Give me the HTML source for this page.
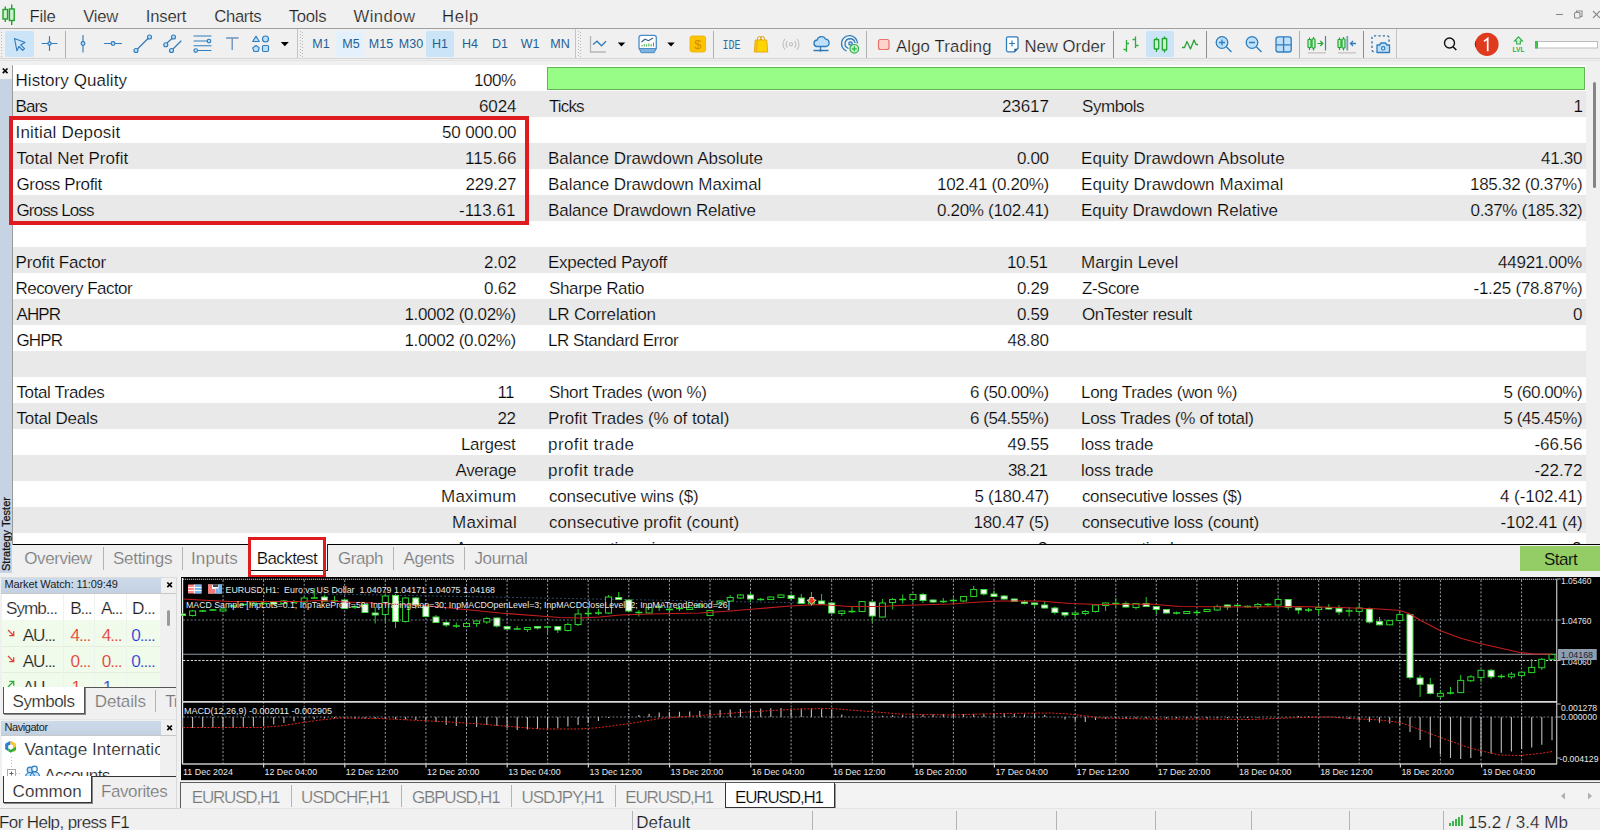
<!DOCTYPE html>
<html><head><meta charset="utf-8"><title>MT5</title>
<style>
*{box-sizing:border-box;margin:0;padding:0}
html,body{width:1600px;height:830px;overflow:hidden;background:#f0f0f0;font-family:"Liberation Sans",sans-serif;color:#1c1c1c;font-size:17px}
.a{position:absolute}
.t{position:absolute;white-space:pre;line-height:20px;height:20px}
/* menu */
/* toolbar */
#tb .sep{position:absolute;top:31px;width:1px;height:27px;background:#b0b0b0}
#tb .sel{position:absolute;background:#cce4f7;border-radius:2px}
#tb .tf{position:absolute;top:36px;height:16px;line-height:16px;font-size:12.5px;color:#1f5f96;text-align:center;white-space:pre}
/* tester table */
#tbl{left:13px;top:65px;width:1573px;height:479px;background:#fff;overflow:hidden}
#tbl .r{position:absolute;left:0;width:1573px;height:26px}
#tbl .g{background:#e9e9e9}
#tbl .r .t{-webkit-text-stroke:0.22px #fff;color:#000}
#tbl .g .t{-webkit-text-stroke:0.22px #e9e9e9;color:#000}
#tbl .t{font-size:17px;top:4.5px;line-height:22px;height:22px}
.la{left:3px}.va{right:1070px;text-align:right}
.lb{left:536px}.vb{right:537px;text-align:right}
.lc{left:1068px}.vc{right:4px;text-align:right}
#tabs .s{position:absolute;top:547px;width:1px;height:23px;background:#b4b4b4}
.redbox{position:absolute;border:4px solid #de1c20}
/* left panels */
.hdr{position:absolute;background:linear-gradient(#cddae9,#c2d1e2);font-size:11.5px;line-height:14px;color:#222;white-space:pre}
.cl{position:absolute;font-size:13px;font-weight:bold;color:#000;line-height:12px}
#ctabs .s{position:absolute;top:785px;width:1px;height:22px;background:#b4b4b4}
#status .s{position:absolute;top:811px;width:1px;height:19px;background:#b4b4b4}
</style></head><body>

<!-- ===== MENU ===== -->
<div id="menu" class="a" style="left:0;top:0;width:1600px;height:28px">
<svg class="a" style="left:0;top:4px" width="20" height="24" viewBox="0 0 20 24">
<g stroke="#21a02c" stroke-width="1.4" fill="#c9f3c9"><line x1="5.3" y1="2.5" x2="5.3" y2="18"/><rect x="3" y="5.5" width="4.6" height="9.5"/><line x1="11.7" y1="0.5" x2="11.7" y2="21"/><rect x="9.4" y="5" width="4.8" height="11.5"/></g></svg>
<span class="t" style="left:29.5px;top:7.0px;font-size:16.7px;letter-spacing:-0.20px;-webkit-text-stroke:0.22px #f0f0f0">File</span><span class="t" style="left:83.3px;top:7.0px;font-size:16.7px;letter-spacing:-0.27px;-webkit-text-stroke:0.22px #f0f0f0">View</span><span class="t" style="left:145.8px;top:7.0px;font-size:16.7px;letter-spacing:-0.22px;-webkit-text-stroke:0.22px #f0f0f0">Insert</span><span class="t" style="left:214.3px;top:7.0px;font-size:16.7px;letter-spacing:-0.36px;-webkit-text-stroke:0.22px #f0f0f0">Charts</span><span class="t" style="left:288.8px;top:7.0px;font-size:16.7px;letter-spacing:-0.28px;-webkit-text-stroke:0.22px #f0f0f0">Tools</span><span class="t" style="left:353.5px;top:7.0px;font-size:16.7px;letter-spacing:0.44px;-webkit-text-stroke:0.22px #f0f0f0">Window</span><span class="t" style="left:442.0px;top:7.0px;font-size:16.7px;letter-spacing:0.65px;-webkit-text-stroke:0.22px #f0f0f0">Help</span>
<span class="t" style="left:896.0px;top:37.0px;font-size:16.7px;letter-spacing:0.16px;-webkit-text-stroke:0.22px #f0f0f0">Algo Trading</span><span class="t" style="left:1024.5px;top:37.0px;font-size:16.7px;letter-spacing:0.02px;-webkit-text-stroke:0.22px #f0f0f0">New Order</span>

<svg class="a" style="left:1550px;top:6px" width="50" height="18" viewBox="0 0 50 18" fill="none" stroke="#8a8a8a" stroke-width="1.1">
<line x1="6" y1="8.5" x2="13" y2="8.5"/><rect x="24.5" y="6.5" width="5.5" height="5.5" rx="1"/><path d="M26.5 6.5v-1.5h5.5v5.5h-2"/><path d="M43 5l7 7M50 5l-7 7"/></svg>
</div>
<div class="a" style="left:0;top:28px;width:1600px;height:1px;background:#a0a0a0"></div>

<!-- ===== TOOLBAR ===== -->
<div id="tb" class="a" style="left:0;top:0;width:1600px;height:60px">
<div class="sel" style="left:5px;top:31px;width:29px;height:26px"></div>
<div class="sel" style="left:336px;top:31px;width:28px;height:26px;background:#e4f0fb"></div>
<div class="sel" style="left:426px;top:31px;width:28px;height:26px"></div>
<div class="sel" style="left:1146px;top:31px;width:28px;height:26px"></div>
<div class="sep" style="left:65px"></div>
<div class="sep" style="left:297px;top:29px;height:29px;background:#c4c4c4"></div>
<div class="sep" style="left:575px;top:29px;height:29px;background:#c4c4c4"></div>
<div class="sep" style="left:713px"></div>
<div class="sep" style="left:866px"></div>
<div class="sep" style="left:1113px;background:#8c8c8c"></div>
<div class="sep" style="left:1206px;background:#8c8c8c"></div>
<div class="sep" style="left:1299px"></div>
<div class="sep" style="left:1363px;background:#8c8c8c"></div>
<div class="sep" style="left:1396px;top:29px;height:29px;background:#c4c4c4"></div>
<span class="tf" style="left:310px;width:22px">M1</span>
<span class="tf" style="left:340px;width:22px">M5</span>
<span class="tf" style="left:366px;width:30px">M15</span>
<span class="tf" style="left:396px;width:30px">M30</span>
<span class="tf" style="left:429px;width:22px">H1</span>
<span class="tf" style="left:459px;width:22px">H4</span>
<span class="tf" style="left:489px;width:22px">D1</span>
<span class="tf" style="left:518px;width:24px">W1</span>
<span class="tf" style="left:548px;width:24px">MN</span>
<svg class="a" style="left:0;top:0" width="1600" height="60" viewBox="0 0 1600 60" fill="none">
<!-- grips -->
<g stroke="#b9b9b9" stroke-width="1" stroke-dasharray="1 2"><line x1="1.5" y1="32" x2="1.5" y2="57"/><line x1="300.5" y1="31" x2="300.5" y2="58"/><line x1="302.5" y1="32" x2="302.5" y2="58"/><line x1="578.5" y1="31" x2="578.5" y2="58"/><line x1="580.5" y1="32" x2="580.5" y2="58"/></g>
<g stroke="#2f7dbd" stroke-width="1.15" fill="#bfe0fb" stroke-linecap="round" stroke-linejoin="round">
<!-- cursor -->
<path d="M14.5 38.5l10.5 4-4.3 2.3 3.8 3.8-1.8 1.7-3.8-3.8-2 4.2z" fill="#cfe6f9"/>
<!-- crosshair -->
<path d="M49.5 36.5v14M42 43.5h15" /><circle cx="49.5" cy="43.5" r="1.6"/>
<!-- vline -->
<path d="M83 35.5v16.5"/><circle cx="83" cy="43.5" r="1.9"/>
<!-- hline -->
<path d="M104.5 43.5h17"/><circle cx="113" cy="43.5" r="1.9"/>
<!-- trend -->
<path d="M137.5 49l10.5-10.5"/><circle cx="136" cy="50.5" r="2"/><circle cx="149.5" cy="37" r="2"/>
<!-- channel -->
<path d="M167 43l5-4.5M173 49l8-8"/><circle cx="173.5" cy="37" r="2"/><circle cx="165.8" cy="44.7" r="2"/><circle cx="171.5" cy="50.5" r="2"/>
<!-- fibo -->
<path d="M194 36h17M194 41h13M194 45.7h17M198 50.5h13"/><circle cx="209" cy="41" r="1.8"/><circle cx="195.7" cy="50.5" r="1.8"/>
<!-- shapes -->
<path d="M256 36.2l3.3 5.3h-6.6z"/><circle cx="265.5" cy="39" r="3"/><path d="M256 45.5l3.3 2.4-1.3 3.6h-4l-1.3-3.6z"/><rect x="262.5" y="45.5" width="6" height="6" rx="1.2"/>
</g>
<!-- T -->
<path d="M226 38h12.5M232.2 38v12" stroke="#6d93bb" stroke-width="1.4"/>
<!-- dropdown arrows -->
<g fill="#000"><path d="M280.8 42h8l-4 4.2z"/><path d="M617.8 42.5h7.4l-3.7 4z"/><path d="M667.3 42.5h7.4l-3.7 4z"/></g>
<!-- line chart icon -->
<path d="M590.5 36v16h15.5" stroke="#b5b5b5" stroke-width="1.3"/><path d="M593 44.5l4-3.3 4.5 4.6 4.5-4.6" stroke="#2f7dbd" stroke-width="1.3"/>
<!-- indicators icon -->
<rect x="639" y="35.3" width="17.3" height="14.5" rx="2.3" fill="#fff" stroke="#4a8cc7" stroke-width="1.3"/>
<path d="M639.3 48.5h16.8l-1.8 4.2h-13.2z" fill="#7fb2e0" stroke="#4a8cc7" stroke-width="1"/>
<path d="M641.5 42l3.5-2.8 3.5 1.5 4.5-2.7" stroke="#2c5f8a" stroke-width="1.1"/>
<g stroke="#3cb043" stroke-width="1"><path d="M642 46.5v-1.5M644.3 46.5v-2.5M646.6 46.5v-2M648.9 46.5v-3M651.2 46.5v-2.5M653.5 46.5v-4"/></g>
<!-- $ -->
<rect x="690" y="36" width="15.6" height="16" rx="2.2" fill="#fcc400" stroke="#eab000" stroke-width="0.8"/>
<text x="697.8" y="49" font-family="Liberation Sans" font-size="13" fill="#d98c00" text-anchor="middle">$</text>
<!-- IDE -->
<text x="722.5" y="48.6" font-family="Liberation Mono" font-size="13.5" fill="#2e6da4" textLength="18" lengthAdjust="spacingAndGlyphs">IDE</text>
<!-- bag -->
<path d="M757.5 40v-1.5a2 2 0 0 1 4 0v1.5M760.5 40v-1.5a2 2 0 0 1 4 0v1.5" stroke="#e0a020" stroke-width="1"/>
<path d="M755.3 40h11.4l1 12h-13.4z" fill="#ffd500" stroke="#e6a817" stroke-width="1"/>
<path d="M757.3 40.5l-1 11.5" stroke="#e6a817" stroke-width="1"/>
<!-- ((o)) -->
<g stroke="#bdbdbd" stroke-width="1.1"><circle cx="791" cy="44.3" r="1.6"/><path d="M787.5 41a5 5 0 0 0 0 6.6M794.5 41a5 5 0 0 1 0 6.6M785 39a8 8 0 0 0 0 10.6M797 39a8 8 0 0 1 0 10.6"/></g>
<!-- cloud -->
<path d="M816.5 46.5a3.3 3.3 0 0 1 .6-6.5 4.6 4.6 0 0 1 8.6-.8 3.7 3.7 0 0 1 .5 7.3z" fill="#bfe0fb" stroke="#2f7dbd" stroke-width="1.3"/>
<path d="M820.5 46.5v3M813.5 50.5h15" stroke="#2f7dbd" stroke-width="1.3"/><circle cx="820.5" cy="50.5" r="1.2" fill="#2f7dbd"/>
<!-- signals -->
<g stroke="#2f7dbd" stroke-width="1.3"><path d="M846.5 51a8 8 0 1 1 11-7.5"/><path d="M848.5 48.5a5 5 0 1 1 6.5-5.5"/><circle cx="850.5" cy="43.5" r="1.7" fill="#bfe0fb"/></g>
<circle cx="854.3" cy="48.8" r="4.3" fill="#c8f5c8" stroke="#2fb14a" stroke-width="1.2"/><path d="M851.8 48.8h5M854.3 46.3v5" stroke="#2fb14a" stroke-width="1.2"/>
<!-- algo square -->
<rect x="878.5" y="39.5" width="10.5" height="10" rx="2" fill="#fdd3cb" stroke="#e8706a" stroke-width="1.2"/>
<!-- new order -->
<path d="M1008 36.8h8.5a1.5 1.5 0 0 1 1.5 1.5v10l-3.5 3.5h-6.5a1.5 1.5 0 0 1-1.5-1.5v-12a1.5 1.5 0 0 1 1.500-1.5z" fill="#fff" stroke="#2f7dbd" stroke-width="1.3"/>
<path d="M1014.300 52v-3.300h3.500z" fill="#1f5f96"/><path d="M1009 43.500h6M1012 40.500v6" stroke="#2f7dbd" stroke-width="1.200"/>
<!-- bars -->
<g stroke="#2fae3c" stroke-width="1.3"><path d="M1126.500 40v12M1123.500 49.500h3M1126.500 43.500h2.500M1135.500 36.500v11.500M1132.500 39.500h3M1135.500 45.500h3"/></g>
<!-- candles -->
<g stroke="#22a532" stroke-width="1.3" fill="#c4f5c4"><path d="M1156.500 37.500v14.500M1164.500 36.500v16"/><rect x="1154.300" y="39.500" width="4.400" height="9.500" rx="0.500"/><rect x="1162.300" y="38.500" width="4.400" height="11.500" rx="0.500"/></g>
<!-- zigzag -->
<path d="M1182 47.500h2.500l2.500-6 3.500 7.500 3.500-9 2 4.500h2" stroke="#22a532" stroke-width="1.300" stroke-linejoin="round"/>
<!-- zoom in/out -->
<g stroke="#2f7dbd" stroke-width="1.300"><circle cx="1222" cy="42.500" r="5.800" fill="#bfe0fb"/><path d="M1226.300 46.800l5.200 5.200M1219 42.500h6M1222 39.500v6"/><circle cx="1252" cy="42.500" r="5.800" fill="#bfe0fb"/><path d="M1256.300 46.800l5.200 5.200M1249 42.500h6"/></g>
<!-- grid -->
<g stroke="#2f7dbd" stroke-width="1.300"><rect x="1276" y="36.800" width="15.200" height="15.200" rx="2.200" fill="#bfe0fb"/><path d="M1283.600 37v15M1276 44.800h15.200"/></g>
<!-- scroll end -->
<g stroke="#22a532" stroke-width="1.200" fill="#c4f5c4"><path d="M1309.500 37.500v12.500M1313.500 37v13.500"/><rect x="1308" y="39.500" width="3" height="8" rx="0.500"/><rect x="1312" y="39" width="3" height="9" rx="0.500"/><path d="M1317.500 43.500h5M1320.300 41l2.500 2.500-2.500 2.500" fill="none"/></g>
<path d="M1325.500 36v14.500" stroke="#4a7fb0" stroke-width="1.200"/><path d="M1308 52.800h18" stroke="#c9c9c9" stroke-width="1.500"/>
<g stroke="#22a532" stroke-width="1.200" fill="#c4f5c4"><path d="M1339.500 37.500v12.500M1343.500 37v13.500"/><rect x="1338" y="39.500" width="3" height="8" rx="0.500"/><rect x="1342" y="39" width="3" height="9" rx="0.500"/></g>
<path d="M1347.300 36v14.500" stroke="#7b9dc0" stroke-width="1.800"/><path d="M1350.500 43.500h5.500M1353 41l-2.500 2.500 2.500 2.500" stroke="#2f7dbd" stroke-width="1.300"/><path d="M1338 52.800h18" stroke="#c9c9c9" stroke-width="1.500"/>
<!-- screenshot -->
<rect x="1372" y="35.800" width="17" height="16" rx="2" stroke="#2f6da8" stroke-width="1.300" stroke-dasharray="2.200 2.200"/>
<rect x="1375.500" y="43" width="15" height="10.500" fill="#f0f0f0"/>
<path d="M1377 45h2.500l1.500-2h4.500l1.500 2h2.500v7.500h-12.500z" fill="#bfe0fb" stroke="#2f7dbd" stroke-width="1.300" stroke-linejoin="round"/><circle cx="1383.200" cy="48.300" r="1.700" stroke="#2f7dbd" stroke-width="1.200" fill="#e8f4fd"/>
<!-- search -->
<circle cx="1449.500" cy="43" r="5" stroke="#111" stroke-width="1.400"/><path d="M1453 46.800l3.300 3.200" stroke="#111" stroke-width="1.600"/>
<!-- notif -->
<path d="M1477.500 40a5 5 0 0 0 0 8" stroke="#111" stroke-width="1.600"/>
<circle cx="1487" cy="44.300" r="11.600" fill="#e03a1e"/>
<path d="M1484 41.400L1487.700 38.500V51.300" stroke="#fff" stroke-width="1.700" stroke-linejoin="miter" fill="none"/>
<!-- LVL -->
<path d="M1518.500 36.800l4 4.200h-2.200v3h-3.600v-3h-2.200z" stroke="#2fae4a" stroke-width="1.100" fill="#d4f5d4"/>
<text x="1512.500" y="51.800" font-family="Liberation Sans" font-weight="bold" font-size="6.500" fill="#2fae4a" textLength="12" lengthAdjust="spacingAndGlyphs">LVL</text>
<!-- progress -->
<rect x="1535.500" y="41.500" width="62" height="6.500" fill="#fff" stroke="#bcbcbc" stroke-width="1"/><rect x="1535" y="41" width="3" height="7.500" fill="#3ec34a"/>
</svg>

</div>
<div class="a" style="left:0;top:58px;width:1600px;height:1px;background:#d4d4d4"></div>
<div class="a" style="left:0;top:60px;width:1600px;height:1px;background:#e2e2e2"></div>

<!-- ===== TESTER ===== -->
<div id="tester">
<div class="a" style="left:0;top:79px;width:12px;height:494px;background:#c5d3e2"></div>
<div class="a" style="left:12px;top:65px;width:1px;height:480px;background:#9a9a9a"></div>
<div class="a" style="left:12px;top:64.5px;width:1588px;height:1px;background:#b4b4b4"></div>
<div id="tbl" class="a">
<div class="r" style="top:0px"><span class="t" style="left:2.5px;letter-spacing:0.07px">History Quality</span><span class="t" style="left:461.0px;letter-spacing:-0.45px">100%</span></div>
<div class="r g" style="top:26px"><span class="t" style="left:2.5px;letter-spacing:-0.90px">Bars</span><span class="t" style="left:466.0px;letter-spacing:-0.12px">6024</span><span class="t" style="left:536.0px;letter-spacing:-0.88px">Ticks</span><span class="t" style="left:989.0px;letter-spacing:-0.08px">23617</span><span class="t" style="left:1069.0px;letter-spacing:-0.45px">Symbols</span><span class="t" style="left:1560.5px;letter-spacing:0.00px">1</span></div>
<div class="r" style="top:52px"><span class="t" style="left:2.5px;letter-spacing:0.19px">Initial Deposit</span><span class="t" style="left:429.0px;letter-spacing:-0.15px">50 000.00</span></div>
<div class="r g" style="top:78px"><span class="t" style="left:3.5px;letter-spacing:0.02px">Total Net Profit</span><span class="t" style="left:452.0px;letter-spacing:0.14px">115.66</span><span class="t" style="left:535.0px;letter-spacing:-0.06px">Balance Drawdown Absolute</span><span class="t" style="left:1004.0px;letter-spacing:-0.38px">0.00</span><span class="t" style="left:1068.0px;letter-spacing:0.06px">Equity Drawdown Absolute</span><span class="t" style="left:1528.0px;letter-spacing:-0.27px">41.30</span></div>
<div class="r" style="top:104px"><span class="t" style="left:3.5px;letter-spacing:-0.37px">Gross Profit</span><span class="t" style="left:452.5px;letter-spacing:-0.21px">229.27</span><span class="t" style="left:535.0px;letter-spacing:-0.05px">Balance Drawdown Maximal</span><span class="t" style="left:924.0px;letter-spacing:-0.31px">102.41 (0.20%)</span><span class="t" style="left:1068.0px;letter-spacing:0.09px">Equity Drawdown Maximal</span><span class="t" style="left:1457.0px;letter-spacing:-0.28px">185.32 (0.37%)</span></div>
<div class="r g" style="top:130px"><span class="t" style="left:3.5px;letter-spacing:-0.89px">Gross Loss</span><span class="t" style="left:446.0px;letter-spacing:0.01px">-113.61</span><span class="t" style="left:535.0px;letter-spacing:-0.19px">Balance Drawdown Relative</span><span class="t" style="left:924.0px;letter-spacing:-0.31px">0.20% (102.41)</span><span class="t" style="left:1068.0px;letter-spacing:-0.06px">Equity Drawdown Relative</span><span class="t" style="left:1457.5px;letter-spacing:-0.31px">0.37% (185.32)</span></div>
<div class="r" style="top:156px"></div>
<div class="r g" style="top:182px"><span class="t" style="left:2.5px;letter-spacing:-0.16px">Profit Factor</span><span class="t" style="left:471.0px;letter-spacing:-0.21px">2.02</span><span class="t" style="left:535.0px;letter-spacing:-0.30px">Expected Payoff</span><span class="t" style="left:994.0px;letter-spacing:-0.40px">10.51</span><span class="t" style="left:1068.0px;letter-spacing:-0.00px">Margin Level</span><span class="t" style="left:1485.0px;letter-spacing:-0.24px">44921.00%</span></div>
<div class="r" style="top:208px"><span class="t" style="left:2.5px;letter-spacing:-0.54px">Recovery Factor</span><span class="t" style="left:471.0px;letter-spacing:-0.21px">0.62</span><span class="t" style="left:536.0px;letter-spacing:-0.34px">Sharpe Ratio</span><span class="t" style="left:1004.0px;letter-spacing:-0.38px">0.29</span><span class="t" style="left:1069.0px;letter-spacing:-0.50px">Z-Score</span><span class="t" style="left:1460.5px;letter-spacing:-0.25px">-1.25 (78.87%)</span></div>
<div class="r g" style="top:234px"><span class="t" style="left:3.5px;letter-spacing:-0.90px">AHPR</span><span class="t" style="left:391.5px;letter-spacing:-0.35px">1.0002 (0.02%)</span><span class="t" style="left:535.0px;letter-spacing:-0.13px">LR Correlation</span><span class="t" style="left:1004.0px;letter-spacing:-0.38px">0.59</span><span class="t" style="left:1069.0px;letter-spacing:-0.36px">OnTester result</span><span class="t" style="left:1560.0px;letter-spacing:0.00px">0</span></div>
<div class="r" style="top:260px"><span class="t" style="left:3.5px;letter-spacing:-0.90px">GHPR</span><span class="t" style="left:391.5px;letter-spacing:-0.35px">1.0002 (0.02%)</span><span class="t" style="left:535.0px;letter-spacing:-0.46px">LR Standard Error</span><span class="t" style="left:994.5px;letter-spacing:-0.27px">48.80</span></div>
<div class="r g" style="top:286px"></div>
<div class="r" style="top:312px"><span class="t" style="left:3.5px;letter-spacing:-0.40px">Total Trades</span><span class="t" style="left:484.5px;letter-spacing:-0.69px">11</span><span class="t" style="left:536.0px;letter-spacing:-0.34px">Short Trades (won %)</span><span class="t" style="left:957.0px;letter-spacing:-0.44px">6 (50.00%)</span><span class="t" style="left:1068.0px;letter-spacing:-0.29px">Long Trades (won %)</span><span class="t" style="left:1490.5px;letter-spacing:-0.44px">5 (60.00%)</span></div>
<div class="r g" style="top:338px"><span class="t" style="left:3.5px;letter-spacing:-0.26px">Total Deals</span><span class="t" style="left:484.5px;letter-spacing:-0.45px">22</span><span class="t" style="left:535.0px;letter-spacing:-0.08px">Profit Trades (% of total)</span><span class="t" style="left:957.0px;letter-spacing:-0.44px">6 (54.55%)</span><span class="t" style="left:1068.0px;letter-spacing:-0.29px">Loss Trades (% of total)</span><span class="t" style="left:1490.5px;letter-spacing:-0.44px">5 (45.45%)</span></div>
<div class="r" style="top:364px"><span class="t" style="left:448.0px;letter-spacing:-0.33px">Largest</span><span class="t" style="left:535.0px;letter-spacing:0.43px">profit trade</span><span class="t" style="left:994.5px;letter-spacing:-0.27px">49.55</span><span class="t" style="left:1068.0px;letter-spacing:-0.14px">loss trade</span><span class="t" style="left:1521.5px;letter-spacing:-0.05px">-66.56</span></div>
<div class="r g" style="top:390px"><span class="t" style="left:442.5px;letter-spacing:-0.34px">Average</span><span class="t" style="left:535.0px;letter-spacing:0.43px">profit trade</span><span class="t" style="left:995.0px;letter-spacing:-0.65px">38.21</span><span class="t" style="left:1068.0px;letter-spacing:-0.14px">loss trade</span><span class="t" style="left:1521.5px;letter-spacing:-0.05px">-22.72</span></div>
<div class="r" style="top:416px"><span class="t" style="left:428.0px;letter-spacing:0.25px">Maximum</span><span class="t" style="left:536.0px;letter-spacing:-0.23px">consecutive wins ($)</span><span class="t" style="left:961.5px;letter-spacing:-0.31px">5 (180.47)</span><span class="t" style="left:1069.0px;letter-spacing:-0.38px">consecutive losses ($)</span><span class="t" style="left:1487.0px;letter-spacing:-0.05px">4 (-102.41)</span></div>
<div class="r g" style="top:442px"><span class="t" style="left:439.0px;letter-spacing:0.25px">Maximal</span><span class="t" style="left:536.0px;letter-spacing:0.01px">consecutive profit (count)</span><span class="t" style="left:960.5px;letter-spacing:-0.20px">180.47 (5)</span><span class="t" style="left:1069.0px;letter-spacing:-0.23px">consecutive loss (count)</span><span class="t" style="left:1487.5px;letter-spacing:-0.10px">-102.41 (4)</span></div>
<div class="r" style="top:468px"><span class="t" style="left:442.5px;letter-spacing:-0.34px">Average</span><span class="t" style="left:536.0px;letter-spacing:-0.33px">consecutive wins</span><span class="t" style="left:1025.0px;letter-spacing:0.00px">3</span><span class="t" style="left:1069.0px;letter-spacing:-0.54px">consecutive losses</span><span class="t" style="left:1559.0px;letter-spacing:0.00px">2</span></div>
<div class="a" style="left:534px;top:2px;width:1038px;height:23px;background:#98fd86;border:1px solid #62b455"></div>
</div>
<div class="a" style="left:13px;top:544px;width:1587px;height:1px;background:#000"></div>
</div>

<!-- ===== BOTTOM ===== -->
<div id="tabs">
<svg class="a" style="left:0;top:490px" width="12" height="84" viewBox="0 0 12 84"><text transform="translate(10,81) rotate(-90)" font-family="Liberation Sans" font-size="11.5" fill="#111" stroke="#111" stroke-width="0.25" textLength="74" lengthAdjust="spacingAndGlyphs">Strategy Tester</text></svg>
<svg class="a" style="left:0;top:64px" width="12" height="14" viewBox="0 0 12 14"><path d="M2.800 4.5l4.700 4.700M7.5 4.5l-4.700 4.7" stroke="#000" stroke-width="1.7"/></svg>
<span class="t" style="left:24.3px;top:549.0px;font-size:17px;letter-spacing:-0.44px;color:#777;-webkit-text-stroke:0.22px #f0f0f0">Overview</span><div class="s" style="left:103px"></div>
<span class="t" style="left:113.0px;top:549.0px;font-size:17px;letter-spacing:-0.28px;color:#777;-webkit-text-stroke:0.22px #f0f0f0">Settings</span><div class="s" style="left:182px"></div>
<span class="t" style="left:191.0px;top:549.0px;font-size:17px;letter-spacing:0.10px;color:#777;-webkit-text-stroke:0.22px #f0f0f0">Inputs</span>
<div class="a" style="left:250px;top:541px;width:77px;height:34px;background:#fff"></div>
<div class="a" style="left:251px;top:570px;width:77px;height:1px;background:#111"></div>
<div class="a" style="left:327px;top:544px;width:1px;height:27px;background:#222"></div>
<span class="t" style="left:256.8px;top:549.0px;font-size:17px;letter-spacing:-0.61px;color:#000;-webkit-text-stroke:0.22px #fff">Backtest</span>
<span class="t" style="left:338.0px;top:549.0px;font-size:17px;letter-spacing:-0.45px;color:#777;-webkit-text-stroke:0.22px #f0f0f0">Graph</span><div class="s" style="left:393px"></div>
<span class="t" style="left:403.6px;top:549.0px;font-size:17px;letter-spacing:-0.41px;color:#777;-webkit-text-stroke:0.22px #f0f0f0">Agents</span><div class="s" style="left:464px"></div>
<span class="t" style="left:474.5px;top:549.0px;font-size:17px;letter-spacing:-0.41px;color:#777;-webkit-text-stroke:0.22px #f0f0f0">Journal</span>
<div class="a" style="left:1520px;top:546px;width:80px;height:25px;background:#94cc65"></div>
<span class="t" style="left:1544.0px;top:550.0px;font-size:17px;letter-spacing:-0.54px;color:#000;-webkit-text-stroke:0.22px #94cc65">Start</span>
<div class="redbox" style="left:9px;top:116px;width:520px;height:109px"></div>
<div class="redbox" style="left:247.600px;top:537.200px;width:78.5px;height:41px;border-width:3.600px"></div>
<div class="a" style="left:1586px;top:65px;width:14px;height:479px;background:#f0f0f0"></div>
<div class="a" style="left:1593.200px;top:82px;width:3px;height:106px;background:#858585;border-radius:1.5px"></div>
</div>

<div id="mw">
<div class="a" style="left:0;top:576px;width:177px;height:232px;background:#f0f0f0"></div>
<div class="a" style="left:0;top:577px;width:177px;height:1px;background:#dcdcdc"></div>
<div class="hdr" style="left:1px;top:578px;width:160px;height:15px"></div>
<span class="t" style="left:4.4px;top:574.0px;font-size:11px;letter-spacing:-0.10px;color:#1c1c1c">Market Watch: 11:09:49</span>
<svg class="a" style="left:164px;top:579px" width="12" height="12" viewBox="0 0 12 12"><path d="M3.3 3.5l4.600 4.600M7.900 3.5l-4.600 4.600" stroke="#000" stroke-width="1.7"/></svg>
<div class="a" style="left:1px;top:593px;width:175px;height:1px;background:#c8c8c8"></div>
<div class="a" style="left:2px;top:594px;width:158px;height:93px;background:#fff"></div>
<div class="a" style="left:2px;top:620px;width:158px;height:67px;background:#f0fbec"></div>
<div class="a" style="left:2px;top:646px;width:158px;height:1px;background:#e3eedf"></div>
<div class="a" style="left:2px;top:672px;width:158px;height:1px;background:#e3eedf"></div>
<div class="a" style="left:63px;top:594px;width:1px;height:93px;background:#eef2ec"></div>
<div class="a" style="left:94px;top:594px;width:1px;height:93px;background:#eef2ec"></div>
<div class="a" style="left:126px;top:594px;width:1px;height:93px;background:#eef2ec"></div>
<span class="t" style="left:6.0px;top:598.0px;font-size:17.2px;letter-spacing:-1.05px;-webkit-text-stroke:0.22px #fff">Symb...</span><span class="t" style="left:70.3px;top:598.0px;font-size:17.2px;letter-spacing:-1.20px;-webkit-text-stroke:0.22px #fff">B...</span><span class="t" style="left:101.0px;top:598.0px;font-size:17.2px;letter-spacing:-1.20px;-webkit-text-stroke:0.22px #fff">A...</span><span class="t" style="left:132.0px;top:598.0px;font-size:17.2px;letter-spacing:-0.99px;-webkit-text-stroke:0.22px #fff">D...</span>
<span class="t" style="left:22.7px;top:625.0px;font-size:17.2px;letter-spacing:-1.20px;-webkit-text-stroke:0.22px #f0fbec">AU...</span><span class="t" style="left:70.5px;top:625.0px;font-size:17.2px;letter-spacing:-1.04px;color:#e0301e;-webkit-text-stroke:0.22px #f0fbec">4...</span><span class="t" style="left:101.8px;top:625.0px;font-size:17.2px;letter-spacing:-1.04px;color:#e0301e;-webkit-text-stroke:0.22px #f0fbec">4...</span><span class="t" style="left:131.2px;top:625.0px;font-size:17.2px;letter-spacing:-1.02px;color:#1c2fd0;-webkit-text-stroke:0.22px #f0fbec">0....</span>
<span class="t" style="left:22.7px;top:651.0px;font-size:17.2px;letter-spacing:-1.20px;-webkit-text-stroke:0.22px #f0fbec">AU...</span><span class="t" style="left:70.5px;top:651.0px;font-size:17.2px;letter-spacing:-1.04px;color:#e0301e;-webkit-text-stroke:0.22px #f0fbec">0...</span><span class="t" style="left:101.8px;top:651.0px;font-size:17.2px;letter-spacing:-1.04px;color:#e0301e;-webkit-text-stroke:0.22px #f0fbec">0...</span><span class="t" style="left:131.2px;top:651.0px;font-size:17.2px;letter-spacing:-1.02px;color:#1c2fd0;-webkit-text-stroke:0.22px #f0fbec">0....</span>
<div class="a" style="left:2px;top:672px;width:158px;height:15px;overflow:hidden"><span class="t" style="left:20.7px;top:5.0px;font-size:17.2px;letter-spacing:-1.20px;-webkit-text-stroke:0.22px #f0fbec">AU...</span><span class="t" style="left:69.5px;top:5.0px;font-size:17.2px;letter-spacing:-1.20px;color:#e0301e;-webkit-text-stroke:0.22px #f0fbec">1...</span><span class="t" style="left:100.8px;top:5.0px;font-size:17.2px;letter-spacing:-1.20px;color:#1c2fd0;-webkit-text-stroke:0.22px #f0fbec">1...</span></div>
<svg class="a" style="left:2px;top:620px" width="20" height="67" viewBox="0 0 20 67" fill="none" stroke-width="1.3"><path d="M6 10l5.5 5.5M7.3 15.700h4.400v-4.400" stroke="#e0413a"/><path d="M6 36l5.5 5.5M7.3 41.700h4.400v-4.400" stroke="#e0413a"/><path d="M6 67l5.5-5.5M7.3 61.300h4.400v4.400" stroke="#2fae3c"/></svg>
<div class="a" style="left:166.5px;top:610px;width:3px;height:16px;background:#9a9a9a;border-radius:1.5px"></div>
<div class="a" style="left:84px;top:687px;width:92px;height:1px;background:#555"></div>
<div class="a" style="left:3px;top:687px;width:82px;height:27px;background:#fff;border:1px solid #555;border-top:none;box-shadow:1px 1px 0 #888"></div>
<span class="t" style="left:12.6px;top:692.0px;font-size:17px;letter-spacing:-0.48px;-webkit-text-stroke:0.22px #fff">Symbols</span><span class="t" style="left:94.8px;top:692.0px;font-size:17px;letter-spacing:-0.14px;color:#777;-webkit-text-stroke:0.22px #f0f0f0">Details</span>
<div class="a" style="left:155px;top:690px;width:1px;height:22px;background:#b4b4b4"></div>
<div class="a" style="left:164px;top:688px;width:12px;height:24px;overflow:hidden"><span class="t" style="left:1.3px;top:4.0px;font-size:17px;letter-spacing:-1.20px;color:#777;-webkit-text-stroke:0.22px #f0f0f0">Tr</span></div>
<div class="a" style="left:0;top:719px;width:177px;height:1px;background:#e6e6e6"></div>
<div class="hdr" style="left:1px;top:721px;width:160px;height:14px"></div>
<span class="t" style="left:4.5px;top:717.0px;font-size:11px;letter-spacing:-0.44px;color:#1c1c1c">Navigator</span>
<svg class="a" style="left:164px;top:722px" width="12" height="12" viewBox="0 0 12 12"><path d="M3.3 3.5l4.600 4.600M7.900 3.5l-4.600 4.600" stroke="#000" stroke-width="1.7"/></svg>
<div class="a" style="left:1px;top:735px;width:175px;height:1px;background:#c8c8c8"></div>
<div class="a" style="left:2px;top:736px;width:158px;height:40px;background:#fff;overflow:hidden">
  <span class="t" style="left:22.4px;top:3.0px;font-size:17.2px;letter-spacing:0.01px;-webkit-text-stroke:0.22px #fff">Vantage International</span>
  <span class="t" style="left:42.3px;top:29.0px;font-size:17.2px;letter-spacing:-0.66px;-webkit-text-stroke:0.22px #fff">Accounts</span>
  <svg class="a" style="left:0;top:0" width="40" height="40" viewBox="0 0 40 40" fill="none">
   <path d="M3.200 7.800l5.300-3v3.600l-2.3 1.300v5.300l-3-1.800z" fill="#2a7fd0"/><path d="M8.5 4.800l5.5 3-2.900 1.700-2.600-1.5z" fill="#f7c325"/><path d="M14 7.800v6.800l-2.900 1.700v-6.800z" fill="#f7c325"/><path d="M6.200 15.300l2.5 1.5 5.300-3.100v-3l-5.3 3.100-2.5-1.5z" fill="#2fae3c"/>
   <path d="M9.5 21v12" stroke="#bbb" stroke-dasharray="1 2"/><rect x="5.5" y="33.5" width="8" height="8" stroke="#aaa"/><path d="M7.5 37.5h4M9.5 35.5v4" stroke="#666"/><path d="M14 37.5h6" stroke="#bbb" stroke-dasharray="1 2"/>
   <circle cx="28" cy="34" r="2.8" fill="#bfe0fb" stroke="#2f7dbd" stroke-width="1.2"/><circle cx="32.5" cy="33" r="2.8" fill="#e8f4fd" stroke="#2f7dbd" stroke-width="1.2"/><path d="M23.5 41a4.5 4.5 0 0 1 9 0M28.5 41a4.5 4.5 0 0 1 9-1" stroke="#2f7dbd" stroke-width="1.2" fill="#bfe0fb"/>
  </svg>
</div>
<div class="a" style="left:91px;top:776px;width:85px;height:1px;background:#333"></div>
<div class="a" style="left:3px;top:776px;width:89px;height:27px;background:#fff;border:1px solid #333;border-top:none;box-shadow:1px 1px 0 #888"></div>
<span class="t" style="left:12.6px;top:782.0px;font-size:17px;letter-spacing:0.04px;-webkit-text-stroke:0.22px #fff">Common</span><span class="t" style="left:101.0px;top:782.0px;font-size:17px;letter-spacing:-0.41px;color:#777;-webkit-text-stroke:0.22px #f0f0f0">Favorites</span>
<div class="a" style="left:176px;top:577px;width:1px;height:231px;background:#dadada"></div>
<div class="a" style="left:0;top:808px;width:180px;height:1px;background:#cfcfcf"></div>
</div>

<svg class="a" style="left:181px;top:577px" width="1419" height="206" viewBox="181 577 1419 206" fill="none" font-family="Liberation Sans">
<rect x="181" y="577" width="1419" height="203.400" fill="#000"/><rect x="181" y="780.400" width="1419" height="2.600" fill="#f6f6f6"/>
<path d="M223.0 580V764M263.6 580V764M304.2 580V764M344.7 580V764M385.3 580V764M425.9 580V764M466.5 580V764M507.1 580V764M547.6 580V764M588.2 580V764M628.8 580V764M669.4 580V764M710.0 580V764M750.5 580V764M791.1 580V764M831.7 580V764M872.3 580V764M912.9 580V764M953.4 580V764M994.0 580V764M1034.6 580V764M1075.2 580V764M1115.8 580V764M1156.3 580V764M1196.9 580V764M1237.5 580V764M1278.1 580V764M1318.7 580V764M1359.2 580V764M1399.8 580V764M1440.4 580V764M1481.0 580V764M1521.6 580V764" stroke="#99a1a9" stroke-width="1" stroke-dasharray="2 1.8"/>
<path d="M183 620H1556" stroke="#70787f" stroke-width="1.1" stroke-dasharray="2 1.8"/>
<path d="M300 593.500L810 603" stroke="#2c4a66" stroke-width="1" stroke-dasharray="2 2"/>
<path d="M183 660.500H1556" stroke="#e0e0e0" stroke-width="1" stroke-dasharray="2.300 1.550"/>
<path d="M183 717H1556" stroke="#70777f" stroke-width="1" stroke-dasharray="2 1.8"/>
<path d="M183 579.300H1556" stroke="#d0d0d0" stroke-width="1.1" stroke-dasharray="1.200 0.800"/>
<path d="M182.500 578V764" stroke="#f0f0f0" stroke-width="1.4"/>
<path d="M1556.700 579V764" stroke="#b4b4b4" stroke-width="1.3"/>
<path d="M182 701.800H1557" stroke="#d6d6d6" stroke-width="1.8"/>
<path d="M182 764H1557" stroke="#c4c4c4" stroke-width="1.3"/>
<path d="M183 654.300H1556" stroke="#9099a6" stroke-width="1.1"/>
<path d="M263.6 764v3.5M344.8 764v3.5M426.0 764v3.5M507.2 764v3.5M588.4 764v3.5M669.6 764v3.5M750.8 764v3.5M832.0 764v3.5M913.2 764v3.5M994.4 764v3.5M1075.6 764v3.5M1156.8 764v3.5M1238.0 764v3.5M1319.2 764v3.5M1400.4 764v3.5M1481.6 764v3.5" stroke="#d0d0d0" stroke-width="1.2"/>
<path d="M1556.700 579h4M1556.700 620h4M1556.700 660.500h4M1556.700 704h4M1556.700 717h4M1556.700 758h4" stroke="#b4b4b4" stroke-width="1"/>
<path d="M182.4 717V728.0M192.6 717V728.0M202.7 717V727.8M212.9 717V727.7M223.0 717V727.5M233.1 717V727.1M243.3 717V726.7M253.4 717V726.4M263.6 717V725.9M273.7 717V724.4M283.9 717V722.9M294.0 717V721.3M304.2 717V719.9M314.3 717V719.2M324.4 717V718.5M334.6 717V718.5M344.7 717V718.5M354.9 717V718.6M365.0 717V718.8M375.2 717V718.9M385.3 717V719.1M395.5 717V719.3M405.6 717V719.6M415.8 717V719.9M425.9 717V720.7M436.0 717V722.0M446.2 717V725.0M456.3 717V726.0M466.5 717V726.5M476.6 717V726.9M486.8 717V725.0M496.9 717V726.0M507.1 717V728.0M517.2 717V730.0M527.4 717V729.5M537.5 717V729.0M547.6 717V728.5M557.8 717V728.0M567.9 717V726.5M578.1 717V725.0M588.2 717V723.0M598.4 717V720.9M608.5 717V717.9M628.8 717V716.0M638.9 717V715.0M649.1 717V713.7M659.2 717V712.5M669.4 717V712.1M679.5 717V711.7M689.7 717V711.4M699.8 717V711.0M710.0 717V710.5M720.1 717V710.0M730.2 717V709.5M740.4 717V709.0M750.5 717V708.7M760.7 717V708.5M770.8 717V708.2M781.0 717V708.0M791.1 717V708.2M801.3 717V708.4M811.4 717V708.6M821.6 717V708.8M831.7 717V709.8M841.8 717V714.6M872.3 717V716.1M882.4 717V715.7M892.6 717V715.3M902.7 717V714.9M912.9 717V714.7M923.0 717V714.5M933.1 717V714.3M943.3 717V714.1M953.4 717V714.0M963.6 717V713.9M973.7 717V713.8M983.9 717V713.7M994.0 717V713.6M1004.2 717V713.6M1014.3 717V713.9M1024.5 717V714.2M1034.6 717V714.5M1044.7 717V714.8M1065.0 717V719.6M1075.2 717V720.8M1085.3 717V721.9M1095.5 717V720.0M1105.6 717V718.9M1115.8 717V718.5M1125.9 717V718.5M1136.0 717V718.5M1146.2 717V718.5M1156.3 717V718.5M1166.5 717V718.5M1176.6 717V718.5M1186.8 717V718.5M1196.9 717V718.5M1207.1 717V718.4M1217.2 717V718.3M1227.4 717V718.2M1237.5 717V718.1M1247.6 717V718.0M1257.8 717V717.7M1298.4 717V716.1M1308.5 717V716.3M1339.0 717V717.9M1349.1 717V718.9M1359.2 717V720.4M1369.4 717V721.9M1379.5 717V722.7M1389.7 717V723.5M1399.8 717V725.0M1410.0 717V732.1M1420.1 717V740.1M1430.3 717V747.8M1440.4 717V754.6M1450.5 717V757.9M1460.7 717V759.0M1470.8 717V758.1M1481.0 717V755.2M1491.1 717V753.6M1501.3 717V752.7M1511.4 717V751.5M1521.6 717V749.1M1531.7 717V747.5M1541.8 717V744.7M1552.0 717V740.3" stroke="#bdbdbd" stroke-width="1.1"/>
<path d="M183 727.5 L230 727.5 L260 727.5 L280 726 L300 723 L320 720 L340 718 L380 718.5 L400 719.5 L420 720.5 L450 722 L480 724 L510 726.5 L540 729 L580 729 L600 727.5 L630 723.5 L660 718.5 L700 715.5 L740 712.5 L780 710 L800 709 L830 708.5 L870 711.5 L900 714 L950 715 L1000 713.5 L1050 713 L1070 714 L1090 716.5 L1100 718 L1150 719 L1200 719 L1250 719.5 L1300 717.5 L1330 717 L1350 718.5 L1380 720 L1400 722.5 L1410 726 L1430 733.5 L1450 741 L1470 748 L1490 753 L1500 755 L1520 755.5 L1540 753.5 L1552 751.5" stroke="#e0261c" stroke-width="1" stroke-dasharray="2 1.5"/>
<path d="M182.4 613V616M192.6 610V616.5M202.7 610V612M212.9 609V611M223.0 609V611M233.1 605V607M243.3 603.5V606M253.4 602V606M263.6 602V605M273.7 601V605M283.9 600V604.5M294.0 600V603.5M304.2 597V603M314.3 588V598.5M324.4 595V601.5M334.6 596V603M344.7 598.5V609M354.9 605V609M365.0 604V613M375.2 607V623.5M385.3 594V622M395.5 594V628M405.6 597V622.5M415.8 597V609M425.9 605.5V617M436.0 615V623M446.2 621V627M456.3 622.5V628M466.5 623V627M476.6 620.5V627M486.8 617V624M496.9 617.5V627.5M507.1 626V629.5M517.2 626V629.5M527.4 627V632M537.5 626V629.5M547.6 626V633M557.8 626V633M567.9 622.5V631.5M578.1 609V626M588.2 608V617M598.4 609V615M608.5 595V614M618.7 592V600M628.8 599.5V611.5M638.9 610V616.5M649.1 607V613.5M659.2 604V611M669.4 606V614M679.5 606V611M689.7 607V610M699.8 604.5V607.5M710.0 610V616M720.1 600.5V604.5M730.2 595V601.5M740.4 594V599M750.5 593V602M760.7 598V600.5M770.8 596.5V600M781.0 594.5V598M791.1 594V600M801.3 594V604M811.4 592V606M821.6 594V604.5M831.7 602V613.5M841.8 610.5V616M852.0 607V613M862.1 601V612M872.3 601.5V622M882.4 599V617.5M892.6 598V609.5M902.7 594.5V603.5M912.9 594V602.5M923.0 593V603M933.1 599.5V603M943.3 598V603M953.4 597.5V603M963.6 596V602M973.7 586V597M983.9 589V595.5M994.0 590.5V597M1004.2 595V599.5M1014.3 598.5V602M1024.5 600V604.5M1034.6 602.5V607M1044.7 602V608.5M1054.9 606.5V614.5M1065.0 612V617.5M1075.2 612V618.5M1085.3 610V615.5M1095.5 604.5V612.5M1105.6 602.5V611M1115.8 598V607M1125.9 601.5V607.5M1136.0 603V609.5M1146.2 597V607M1156.3 606V614M1166.5 609V613.5M1176.6 611.5V614.5M1186.8 611V614M1196.9 610V614.5M1207.1 609V612M1217.2 604.5V611M1227.4 604.5V610M1237.5 604V611M1247.6 605.5V607.5M1257.8 603V609M1267.9 603V606.5M1278.1 597.5V606.5M1288.2 599V610M1298.4 607.5V614M1308.5 608V612M1318.7 605V614.5M1328.8 604V609.5M1339.0 605V615M1349.1 607V616.5M1359.2 604V614M1369.4 607.5V623.5M1379.5 617V625.3M1389.7 620V625.3M1399.8 611V621M1410.0 614V679.5M1420.1 675V697M1430.3 678V694.5M1440.4 690V698M1450.5 687V694.5M1460.7 675V693M1470.8 675V682M1481.0 669.8V682M1491.1 669V679M1501.3 674V678.5M1511.4 672V679M1521.6 671V678M1531.7 659V673M1541.8 658V670M1552.0 654V660" stroke="#25cc25" stroke-width="1"/>
<path d="M199.2 611h7M209.4 610h7M229.6 606h7M239.8 604.5h7M260.1 603.5h7M290.5 602h7M310.8 598h7M331.1 601h7M351.4 607h7M452.8 626h7M513.7 629h7M544.1 627h7M584.7 613.5h7M594.9 613h7M635.4 612.5h7M655.7 607h7M665.9 609.5h7M676.0 608.5h7M757.2 599.5h7M848.5 611.5h7M899.2 599.5h7M939.8 601.5h7M949.9 600.5h7M1112.3 603.5h7M1173.1 613h7M1193.4 612.5h7M1234.0 605.5h7M1244.1 606.5h7M1264.4 604.5h7M1305.0 610h7M1345.6 611h7M1447.0 693h7M1497.8 676.5h7" stroke="#2bdc2b" stroke-width="1.4"/>
<g fill="#000" stroke="#28cf28" stroke-width="1.05"><rect x="189.6" y="611" width="6" height="4.5"/><rect x="220.0" y="609" width="6" height="2.0"/><rect x="250.4" y="603" width="6" height="2.0"/><rect x="280.9" y="601" width="6" height="2.5"/><rect x="301.2" y="598" width="6" height="4.0"/><rect x="382.3" y="596" width="6" height="18.5"/><rect x="402.6" y="598" width="6" height="23.5"/><rect x="463.5" y="623.5" width="6" height="3.0"/><rect x="473.6" y="621" width="6" height="2.5"/><rect x="483.8" y="618.5" width="6" height="3.5"/><rect x="524.4" y="627.5" width="6" height="2.0"/><rect x="564.9" y="624.5" width="6" height="6.0"/><rect x="575.1" y="614" width="6" height="10.5"/><rect x="605.5" y="597" width="6" height="16.0"/><rect x="646.1" y="607.5" width="6" height="5.5"/><rect x="686.7" y="607.5" width="6" height="2.0"/><rect x="696.8" y="605" width="6" height="2.0"/><rect x="707.0" y="610.5" width="6" height="5.0"/><rect x="717.1" y="601" width="6" height="3.0"/><rect x="727.2" y="597.5" width="6" height="3.5"/><rect x="737.4" y="595" width="6" height="3.0"/><rect x="767.8" y="597" width="6" height="2.5"/><rect x="778.0" y="595" width="6" height="2.5"/><rect x="808.4" y="600" width="6" height="4.0"/><rect x="838.8" y="611" width="6" height="2.5"/><rect x="859.1" y="601.5" width="6" height="10.0"/><rect x="879.4" y="603" width="6" height="14.0"/><rect x="889.6" y="599.5" width="6" height="3.0"/><rect x="909.9" y="594.5" width="6" height="5.0"/><rect x="960.6" y="596.5" width="6" height="4.5"/><rect x="970.7" y="589.5" width="6" height="7.0"/><rect x="1072.2" y="613" width="6" height="1.5"/><rect x="1082.3" y="611.5" width="6" height="2.0"/><rect x="1092.5" y="605" width="6" height="6.5"/><rect x="1102.6" y="603" width="6" height="2.5"/><rect x="1133.0" y="603.5" width="6" height="4.0"/><rect x="1183.8" y="611.5" width="6" height="2.0"/><rect x="1204.1" y="609.5" width="6" height="2.0"/><rect x="1214.2" y="606.5" width="6" height="3.5"/><rect x="1254.8" y="604.5" width="6" height="2.0"/><rect x="1275.1" y="599.5" width="6" height="5.5"/><rect x="1315.7" y="607.5" width="6" height="2.0"/><rect x="1356.2" y="608" width="6" height="3.5"/><rect x="1386.7" y="620.6" width="6" height="4.2"/><rect x="1396.8" y="614.6" width="6" height="6.0"/><rect x="1437.4" y="693.4" width="6" height="2.9"/><rect x="1457.7" y="680.4" width="6" height="12.2"/><rect x="1467.8" y="676.8" width="6" height="3.9"/><rect x="1478.0" y="670.3" width="6" height="7.1"/><rect x="1508.4" y="674.2" width="6" height="2.6"/><rect x="1518.6" y="672.2" width="6" height="3.3"/><rect x="1528.7" y="667.4" width="6" height="5.2"/><rect x="1538.8" y="659.3" width="6" height="8.4"/><rect x="1549.0" y="654.4" width="6" height="4.9"/></g>
<g fill="#f6fff2" stroke="#44dc44" stroke-width="1"><rect x="179.4" y="614" width="6" height="1.5"/><rect x="270.7" y="602" width="6" height="2.0"/><rect x="321.4" y="597" width="6" height="4.0"/><rect x="341.7" y="600" width="6" height="8.5"/><rect x="362.0" y="604.5" width="6" height="8.0"/><rect x="372.2" y="613" width="6" height="2.0"/><rect x="392.5" y="595.5" width="6" height="26.0"/><rect x="412.8" y="598" width="6" height="7.0"/><rect x="422.9" y="606" width="6" height="10.5"/><rect x="433.0" y="617" width="6" height="5.5"/><rect x="443.2" y="622.5" width="6" height="2.5"/><rect x="493.9" y="618" width="6" height="8.0"/><rect x="504.1" y="626.5" width="6" height="2.5"/><rect x="534.5" y="626.5" width="6" height="1.5"/><rect x="554.8" y="626.5" width="6" height="3.5"/><rect x="615.7" y="597.5" width="6" height="2.0"/><rect x="625.8" y="600" width="6" height="11.0"/><rect x="747.5" y="595" width="6" height="4.0"/><rect x="788.1" y="595.5" width="6" height="3.0"/><rect x="798.3" y="598" width="6" height="5.5"/><rect x="818.6" y="601" width="6" height="3.0"/><rect x="828.7" y="603" width="6" height="10.0"/><rect x="869.3" y="602" width="6" height="14.0"/><rect x="920.0" y="594.5" width="6" height="6.0"/><rect x="930.1" y="600" width="6" height="2.0"/><rect x="980.9" y="589.5" width="6" height="4.5"/><rect x="991.0" y="594" width="6" height="2.5"/><rect x="1001.2" y="596" width="6" height="3.0"/><rect x="1011.3" y="599" width="6" height="2.5"/><rect x="1021.5" y="602" width="6" height="1.5"/><rect x="1031.6" y="603" width="6" height="1.5"/><rect x="1041.7" y="605" width="6" height="3.0"/><rect x="1051.9" y="608" width="6" height="4.5"/><rect x="1062.0" y="612.5" width="6" height="2.5"/><rect x="1122.9" y="603.5" width="6" height="3.5"/><rect x="1143.2" y="603.5" width="6" height="3.0"/><rect x="1153.3" y="606.5" width="6" height="3.0"/><rect x="1163.5" y="609.5" width="6" height="3.5"/><rect x="1224.4" y="605" width="6" height="2.0"/><rect x="1285.2" y="599.5" width="6" height="8.0"/><rect x="1295.4" y="608" width="6" height="2.0"/><rect x="1325.8" y="607.5" width="6" height="1.5"/><rect x="1336.0" y="608.5" width="6" height="3.5"/><rect x="1366.4" y="609" width="6" height="13.0"/><rect x="1376.5" y="621.5" width="6" height="3.3"/><rect x="1407.0" y="614.6" width="6" height="62.8"/><rect x="1417.1" y="678" width="6" height="6.4"/><rect x="1427.3" y="684.4" width="6" height="9.0"/><rect x="1488.1" y="670.3" width="6" height="6.5"/></g>
<path d="M183 599 L200 600 L230 601.5 L270 601.5 L300 601.5 L320 600.5 L345 602 L370 603 L400 604.5 L430 606 L440 607 L470 610 L500 613 L540 616 L560 617.5 L580 618 L600 617 L620 615 L650 614 L700 613 L730 611 L760 608.5 L790 606 L820 604.5 L850 606.5 L880 606.5 L900 605.5 L950 604 L980 602 L1000 601 L1040 601 L1070 603.5 L1100 604.5 L1150 604 L1180 606.5 L1250 607 L1300 606.5 L1340 607.5 L1380 609 L1400 610.5 L1410 614 L1420 620 L1440 630.5 L1460 638 L1480 643.5 L1500 648 L1520 652.5 L1535 654 L1552 654" stroke="#c81e1c" stroke-width="1.1" stroke-linejoin="round"/>
<path d="M809.700 597.500h4v2.500h2.500l-4.500 4.500-4.500-4.500h2.500z" fill="#e8391c" stroke="#ffe8e0" stroke-width="0.8"/>
<rect x="188" y="584.5" width="13.5" height="9" fill="#f88" /><rect x="194.5" y="584.5" width="7" height="9" fill="#7ab8f0"/><path d="M188 587.500h13.500M188 590.500h13.500M194.300 584.500v9" stroke="#fff" stroke-width="0.9"/>
<rect x="208" y="584.5" width="14" height="9" fill="#fff"/><rect x="208" y="584.5" width="4" height="9" fill="#f47a7a"/><rect x="212" y="589" width="3" height="4.5" fill="#f47a7a"/><rect x="215.5" y="588.5" width="3" height="5" fill="#6cb2f0"/><rect x="218.5" y="584.5" width="3.5" height="9" fill="#6cb2f0"/><rect x="213" y="584.5" width="5" height="2.5" fill="#444"/>
<text x="225.5" y="593.300" fill="#e8e8e8" font-size="9.700" textLength="269.5" lengthAdjust="spacingAndGlyphs" xml:space="preserve">EURUSD,H1:  Euro vs US Dollar  1.04079 1.04171 1.04075 1.04168</text>
<text x="186" y="607.800" fill="#e8e8e8" font-size="9.700" textLength="544" lengthAdjust="spacingAndGlyphs">MACD Sample [InpLots=0.1; InpTakeProfit=50; InpTrailingStop=30; InpMACDOpenLevel=3; InpMACDCloseLevel=2; InpMATrendPeriod=26]</text>
<text x="184" y="714.300" fill="#e8e8e8" font-size="9.700" textLength="148" lengthAdjust="spacingAndGlyphs">MACD(12,26,9) -0.002011 -0.002905</text>
<text x="183" y="775.300" fill="#e8e8e8" font-size="9.700" textLength="50" lengthAdjust="spacingAndGlyphs">11 Dec 2024</text>
<text x="264.6" y="775.300" fill="#e8e8e8" font-size="9.700" textLength="52.5" lengthAdjust="spacingAndGlyphs">12 Dec 04:00</text>
<text x="345.8" y="775.300" fill="#e8e8e8" font-size="9.700" textLength="52.5" lengthAdjust="spacingAndGlyphs">12 Dec 12:00</text>
<text x="427.0" y="775.300" fill="#e8e8e8" font-size="9.700" textLength="52.5" lengthAdjust="spacingAndGlyphs">12 Dec 20:00</text>
<text x="508.2" y="775.300" fill="#e8e8e8" font-size="9.700" textLength="52.5" lengthAdjust="spacingAndGlyphs">13 Dec 04:00</text>
<text x="589.4" y="775.300" fill="#e8e8e8" font-size="9.700" textLength="52.5" lengthAdjust="spacingAndGlyphs">13 Dec 12:00</text>
<text x="670.6" y="775.300" fill="#e8e8e8" font-size="9.700" textLength="52.5" lengthAdjust="spacingAndGlyphs">13 Dec 20:00</text>
<text x="751.8" y="775.300" fill="#e8e8e8" font-size="9.700" textLength="52.5" lengthAdjust="spacingAndGlyphs">16 Dec 04:00</text>
<text x="833.0" y="775.300" fill="#e8e8e8" font-size="9.700" textLength="52.5" lengthAdjust="spacingAndGlyphs">16 Dec 12:00</text>
<text x="914.2" y="775.300" fill="#e8e8e8" font-size="9.700" textLength="52.5" lengthAdjust="spacingAndGlyphs">16 Dec 20:00</text>
<text x="995.4" y="775.300" fill="#e8e8e8" font-size="9.700" textLength="52.5" lengthAdjust="spacingAndGlyphs">17 Dec 04:00</text>
<text x="1076.6" y="775.300" fill="#e8e8e8" font-size="9.700" textLength="52.5" lengthAdjust="spacingAndGlyphs">17 Dec 12:00</text>
<text x="1157.8" y="775.300" fill="#e8e8e8" font-size="9.700" textLength="52.5" lengthAdjust="spacingAndGlyphs">17 Dec 20:00</text>
<text x="1239.0" y="775.300" fill="#e8e8e8" font-size="9.700" textLength="52.5" lengthAdjust="spacingAndGlyphs">18 Dec 04:00</text>
<text x="1320.2" y="775.300" fill="#e8e8e8" font-size="9.700" textLength="52.5" lengthAdjust="spacingAndGlyphs">18 Dec 12:00</text>
<text x="1401.4" y="775.300" fill="#e8e8e8" font-size="9.700" textLength="52.5" lengthAdjust="spacingAndGlyphs">18 Dec 20:00</text>
<text x="1482.6" y="775.300" fill="#e8e8e8" font-size="9.700" textLength="52.5" lengthAdjust="spacingAndGlyphs">19 Dec 04:00</text>
<rect x="1558" y="649" width="38.5" height="11" fill="#8f9db0"/>
<text x="1561" y="583.8" fill="#e4e4e4" font-size="9.700" textLength="30.5" lengthAdjust="spacingAndGlyphs">1.05460</text>
<text x="1561" y="624.3" fill="#e4e4e4" font-size="9.700" textLength="30.5" lengthAdjust="spacingAndGlyphs">1.04760</text>
<text x="1561" y="664.5" fill="#e4e4e4" font-size="9.700" textLength="30.5" lengthAdjust="spacingAndGlyphs">1.04060</text>
<text x="1561" y="658.3" fill="#1a2430" font-size="9.700" textLength="30.5" lengthAdjust="spacingAndGlyphs">1.04168</text>
<text x="1561" y="711" fill="#e4e4e4" font-size="9.700" textLength="36" lengthAdjust="spacingAndGlyphs">0.001278</text>
<text x="1561" y="720.3" fill="#e4e4e4" font-size="9.700" textLength="36" lengthAdjust="spacingAndGlyphs">0.000000</text>
<rect x="1558" y="649" width="38.5" height="11" fill="#8f9db0"/><text x="1561" y="658.300" fill="#1a2430" font-size="9.700" textLength="32" lengthAdjust="spacingAndGlyphs">1.04168</text>
<text x="1559.5" y="762.300" fill="#e8e8e8" font-size="9.700" textLength="39" lengthAdjust="spacingAndGlyphs">-0.004129</text>
</svg>
<div id="ctabs">
<div class="a" style="left:180px;top:782px;width:1420px;height:26px;background:#f3f3f3;border-top:1px solid #5a5a5a;border-left:1px solid #5a5a5a"></div>
<span class="t" style="left:191.8px;top:788.0px;font-size:17px;letter-spacing:-1.20px;color:#777;-webkit-text-stroke:0.22px #f3f3f3">EURUSD,H1</span><div class="s" style="left:291px"></div>
<span class="t" style="left:301.0px;top:788.0px;font-size:17px;letter-spacing:-0.79px;color:#777;-webkit-text-stroke:0.22px #f3f3f3">USDCHF,H1</span><div class="s" style="left:401px"></div>
<span class="t" style="left:412.0px;top:788.0px;font-size:17px;letter-spacing:-1.20px;color:#777;-webkit-text-stroke:0.22px #f3f3f3">GBPUSD,H1</span><div class="s" style="left:511px"></div>
<span class="t" style="left:521.6px;top:788.0px;font-size:17px;letter-spacing:-1.06px;color:#777;-webkit-text-stroke:0.22px #f3f3f3">USDJPY,H1</span><div class="s" style="left:615px"></div>
<span class="t" style="left:625.3px;top:788.0px;font-size:17px;letter-spacing:-1.16px;color:#777;-webkit-text-stroke:0.22px #f3f3f3">EURUSD,H1</span>
<div class="a" style="left:725px;top:783px;width:110px;height:25px;background:#fff;border:1px solid #333;border-top:none;box-shadow:1px 1px 0 #999"></div>
<span class="t" style="left:735.0px;top:788.0px;font-size:17px;letter-spacing:-1.15px;color:#000;-webkit-text-stroke:0.22px #fff">EURUSD,H1</span>
<svg class="a" style="left:1555px;top:790px" width="40" height="12" viewBox="0 0 40 12"><path d="M10 2.5v7l-4-3.5z" fill="#b0b0b0"/><path d="M33 2.5v7l4-3.5z" fill="#b0b0b0"/></svg>
</div>

<div id="status">
<div class="a" style="left:180px;top:808px;width:1420px;height:1px;background:#e4e4e4"></div>
<span class="t" style="left:-1.0px;top:813.0px;font-size:17px;letter-spacing:-0.59px;-webkit-text-stroke:0.22px #f0f0f0">For Help, press F1</span>
<div class="s" style="left:632px"></div><span class="t" style="left:636.3px;top:813.0px;font-size:17px;letter-spacing:0.03px;-webkit-text-stroke:0.22px #f0f0f0">Default</span>
<div class="s" style="left:812px"></div><div class="s" style="left:956px"></div><div class="s" style="left:1056px"></div>
<div class="s" style="left:1155px"></div><div class="s" style="left:1251px"></div><div class="s" style="left:1349px"></div><div class="s" style="left:1443px"></div>
<svg class="a" style="left:1447px;top:812px" width="18" height="16" viewBox="0 0 18 16"><g fill="#3cb54a"><rect x="2" y="11" width="2" height="3"/><rect x="5" y="9" width="2" height="5"/><rect x="8" y="7" width="2" height="7"/><rect x="11" y="5" width="2" height="9"/><rect x="14" y="3" width="2" height="11"/></g></svg>
<span class="t" style="left:1468.0px;top:813.0px;font-size:17px;letter-spacing:0.06px;-webkit-text-stroke:0.22px #f0f0f0">15.2 / 3.4 Mb</span>
</div>


</body></html>
